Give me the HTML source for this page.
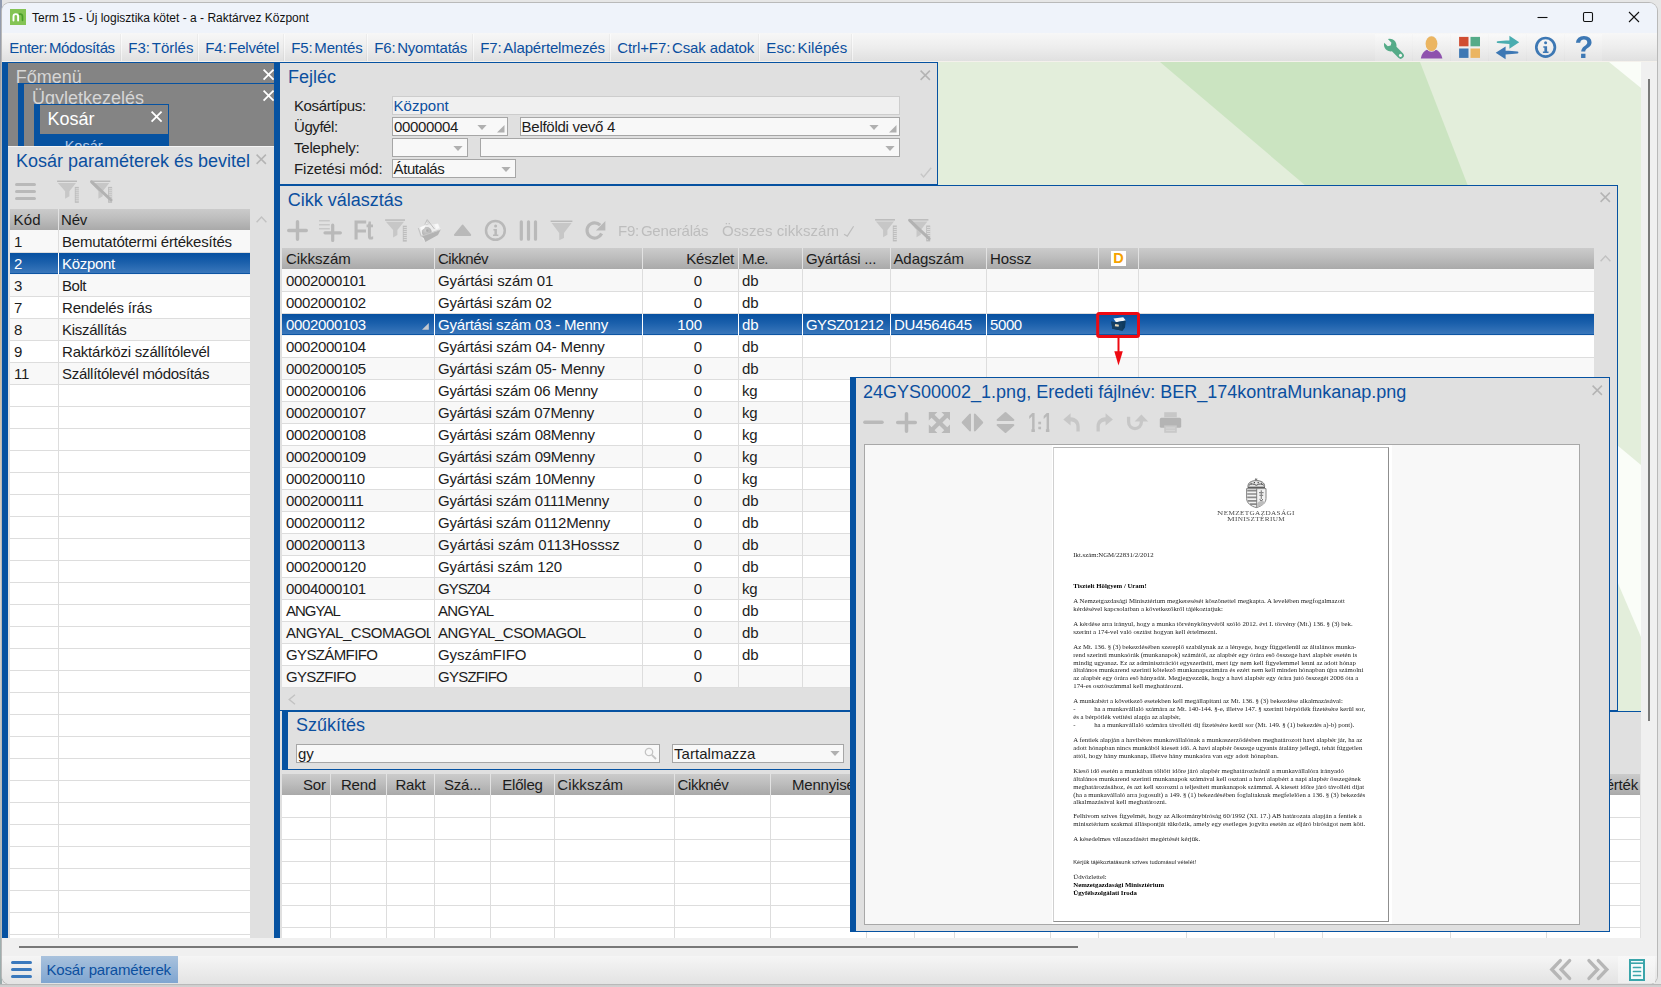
<!DOCTYPE html>
<html lang="hu"><head><meta charset="utf-8"><title>Term 15</title>
<style>
html,body{margin:0;padding:0}
body{width:1661px;height:987px;overflow:hidden;position:relative;background:#ececec;font-family:"Liberation Sans",Arial,sans-serif;}
div{position:absolute;box-sizing:border-box}
.t{white-space:nowrap}
svg{position:absolute;overflow:visible}
.hd{background:linear-gradient(#cbcbcb,#bdbdbd 45%,#a9a9a9);}
.sel{background:linear-gradient(#0650a0,#1a5fab 45%,#3a77bb);border-bottom:1px solid #0d55a3}
.inp{background:#f8f8f8;border:1px solid #a6a6a6;}
.doc{font-family:"Liberation Serif","Times New Roman",serif;font-size:6.77px;line-height:7.78px;color:#222;white-space:nowrap}

</style></head><body>
<div style="left:0px;top:0px;width:1661px;height:987px;background:#e6e6e6"></div><div style="left:0px;top:0px;width:2px;height:987px;background:linear-gradient(#8f9ab0,#c9b38a 30%,#d8d8d8 60%,#9aa)"></div><div style="left:0px;top:984px;width:1661px;height:3px;background:linear-gradient(#a9a9a9,#cdcdcd 40%,#d2d2d2)"></div><div style="left:2px;top:3px;width:1655px;height:981px;background:#f0f0f0;border-radius:8px;box-shadow:0 0 0 1px #b9b9b9"></div><div style="left:2px;top:3px;width:1655px;height:30px;background:#eff3fa;border-radius:8px 8px 0 0"></div><div style="left:10px;top:9px;width:16px;height:16px;background:#84c455"></div><svg style="left:10px;top:9px" width="16" height="16" viewBox="0 0 16 16"><path d="M3.5 11.6V7.4a2.3 2.3 0 0 1 4.600 0V11.600" fill="none" stroke="#fff" stroke-width="1.900" stroke-linecap="round"/><path d="M9.600 5.200C11.600 4.800 12.500 6 12.500 7.600V11.300" fill="none" stroke="#4a9e2a" stroke-width="1.700" stroke-linecap="round"/></svg><div class="t" style="left:32px;top:10.0px;font-size:12px;line-height:16px;color:#111;">Term 15 - Új logisztika kötet - a - Raktárvez Központ</div><svg style="left:0;top:0" width="1661" height="34"><g stroke="#111" stroke-width="1.1" fill="none"><path d="M1537.5 17.5h10"/><rect x="1583.5" y="12.5" width="9" height="9" rx="1.2"/><path d="M1629 12l10 10M1639 12l-10 10"/></g></svg><div style="left:2px;top:33px;width:1655px;height:29px;background:linear-gradient(#f7f7f7,#ededed 50%,#dfdfdf)"></div><div style="left:3px;top:34px;width:119px;height:27px;border-right:1px solid rgba(255,255,255,0.55);box-shadow:-1px 0 0 rgba(0,0,0,0.035) inset"></div><div class="t" style="left:9.3px;top:37.5px;font-size:15px;line-height:20px;color:#0b4f9f;letter-spacing:-0.2px;letter-spacing:-0.371px;">Enter:<span style="margin-left:1.8px">Módosítás</span></div><div style="left:122px;top:34px;width:77px;height:27px;border-right:1px solid rgba(255,255,255,0.55);box-shadow:-1px 0 0 rgba(0,0,0,0.035) inset"></div><div class="t" style="left:128.3px;top:37.5px;font-size:15px;line-height:20px;color:#0b4f9f;letter-spacing:-0.2px;letter-spacing:0.002px;">F3:<span style="margin-left:1.8px">Törlés</span></div><div style="left:199px;top:34px;width:86px;height:27px;border-right:1px solid rgba(255,255,255,0.55);box-shadow:-1px 0 0 rgba(0,0,0,0.035) inset"></div><div class="t" style="left:205.3px;top:37.5px;font-size:15px;line-height:20px;color:#0b4f9f;letter-spacing:-0.2px;letter-spacing:-0.200px;">F4:<span style="margin-left:1.8px">Felvétel</span></div><div style="left:285px;top:34px;width:83px;height:27px;border-right:1px solid rgba(255,255,255,0.55);box-shadow:-1px 0 0 rgba(0,0,0,0.035) inset"></div><div class="t" style="left:291.3px;top:37.5px;font-size:15px;line-height:20px;color:#0b4f9f;letter-spacing:-0.2px;letter-spacing:-0.150px;">F5:<span style="margin-left:1.8px">Mentés</span></div><div style="left:368px;top:34px;width:106px;height:27px;border-right:1px solid rgba(255,255,255,0.55);box-shadow:-1px 0 0 rgba(0,0,0,0.035) inset"></div><div class="t" style="left:374.3px;top:37.5px;font-size:15px;line-height:20px;color:#0b4f9f;letter-spacing:-0.2px;letter-spacing:-0.200px;">F6:<span style="margin-left:1.8px">Nyomtatás</span></div><div style="left:474px;top:34px;width:137px;height:27px;border-right:1px solid rgba(255,255,255,0.55);box-shadow:-1px 0 0 rgba(0,0,0,0.035) inset"></div><div class="t" style="left:480.3px;top:37.5px;font-size:15px;line-height:20px;color:#0b4f9f;letter-spacing:-0.2px;letter-spacing:-0.138px;">F7:<span style="margin-left:1.8px">Alapértelmezés</span></div><div style="left:611px;top:34px;width:149px;height:27px;border-right:1px solid rgba(255,255,255,0.55);box-shadow:-1px 0 0 rgba(0,0,0,0.035) inset"></div><div class="t" style="left:617.3px;top:37.5px;font-size:15px;line-height:20px;color:#0b4f9f;letter-spacing:-0.2px;letter-spacing:-0.109px;">Ctrl+F7:<span style="margin-left:1.8px">Csak adatok</span></div><div style="left:760px;top:34px;width:93px;height:27px;border-right:1px solid rgba(255,255,255,0.55);box-shadow:-1px 0 0 rgba(0,0,0,0.035) inset"></div><div class="t" style="left:766.3px;top:37.5px;font-size:15px;line-height:20px;color:#0b4f9f;letter-spacing:-0.2px;letter-spacing:0.080px;">Esc:<span style="margin-left:1.8px">Kilépés</span></div><div style="left:2px;top:61px;width:1655px;height:1px;background:#f4f1ec"></div><div style="left:1375px;top:34px;width:37px;height:27px;background:linear-gradient(#f9f9f9,#efefef 50%,#e4e4e4)"></div><div style="left:1413px;top:34px;width:37px;height:27px;background:linear-gradient(#f9f9f9,#efefef 50%,#e4e4e4)"></div><div style="left:1451px;top:34px;width:37px;height:27px;background:linear-gradient(#f9f9f9,#efefef 50%,#e4e4e4)"></div><div style="left:1489px;top:34px;width:37px;height:27px;background:linear-gradient(#f9f9f9,#efefef 50%,#e4e4e4)"></div><div style="left:1527px;top:34px;width:37px;height:27px;background:linear-gradient(#f9f9f9,#efefef 50%,#e4e4e4)"></div><div style="left:1565px;top:34px;width:37px;height:27px;background:linear-gradient(#f9f9f9,#efefef 50%,#e4e4e4)"></div><div style="left:8px;top:62px;width:1633px;height:876px;background:#e3eedb"></div><svg style="left:0;top:0" width="1661" height="987"><polygon points="1160,62 1420,62 1468,186 1306,186" fill="#cbe4c1"/><polygon points="1609,62 1641,62 1641,88" fill="#fafdf8"/><polygon points="1617,445 1641,465 1641,637 1617,581" fill="#fafdf8"/></svg><div style="left:1641px;top:62px;width:16px;height:878px;background:#f0f0f0"></div><div style="left:1648px;top:79px;width:2px;height:642px;background:#7a7a7a"></div><div style="left:2px;top:62px;width:272px;height:1px;background:#0652a1"></div><div style="left:2px;top:62px;width:6px;height:876px;background:#0652a1"></div><div style="left:8px;top:63px;width:266px;height:83px;background:#848484"></div><div class="t" style="left:15.7px;top:65.5px;font-size:18px;line-height:23px;color:#d6d6d6;">Főmenü</div><div style="left:18px;top:83px;width:256px;height:1px;background:#0652a1"></div><div style="left:18px;top:83px;width:6px;height:63px;background:#0652a1"></div><div style="left:24px;top:84px;width:250px;height:21px;overflow:hidden"><div class="t" style="left:7.95px;top:3.0px;font-size:18px;line-height:22px;color:#d6d6d6">Ügyletkezelés</div></div><div style="left:34px;top:104px;width:135px;height:1px;background:#0652a1"></div><div style="left:34px;top:104px;width:6px;height:42px;background:#0652a1"></div><div style="left:168px;top:104px;width:1px;height:42px;background:#0652a1"></div><div style="left:40px;top:134px;width:128px;height:12px;background:#0652a1;overflow:hidden"><div class="t" style="left:24.7px;top:3.0px;font-size:14.5px;line-height:18px;color:#b5c9e4">Kosár</div></div><div class="t" style="left:47.6px;top:107.5px;font-size:18px;line-height:23px;color:#ffffff;">Kosár</div><svg style="left:262.8px;top:69px" width="11.2" height="11.2" viewBox="0 0 11.2 11.2"><path d="M0.6 0.6L10.6 10.6M10.6 0.6L0.6 10.6" stroke="#fff" stroke-width="1.8" fill="none"/></svg><svg style="left:262.8px;top:90px" width="11.2" height="11.2" viewBox="0 0 11.2 11.2"><path d="M0.6 0.6L10.6 10.6M10.6 0.6L0.6 10.6" stroke="#fff" stroke-width="1.8" fill="none"/></svg><svg style="left:151px;top:110.8px" width="11.2" height="11.2" viewBox="0 0 11.2 11.2"><path d="M0.6 0.6L10.6 10.6M10.6 0.6L0.6 10.6" stroke="#fff" stroke-width="1.8" fill="none"/></svg><div style="left:8px;top:146px;width:266px;height:792px;background:#e0e0e0;border-top:1px solid #f4f4f4"></div><div class="t" style="left:16px;top:149.5px;font-size:18px;line-height:23px;color:#0b4f9f;">Kosár paraméterek és bevitel</div><svg style="left:256px;top:153.5px" width="10.5" height="10.5" viewBox="0 0 10.5 10.5"><path d="M0.6 0.6L9.9 9.9M9.9 0.6L0.6 9.9" stroke="#b4b4b4" stroke-width="1.5" fill="none"/></svg><div class="hd" style="left:10px;top:209px;width:240px;height:21px;"></div><div style="left:58px;top:209px;width:1px;height:21px;background:#e2e2e2"></div><div class="t" style="left:13.5px;top:209.5px;font-size:15px;line-height:20px;color:#1c1c1c;letter-spacing:-0.2px;letter-spacing:0.200px;">Kód</div><div class="t" style="left:61px;top:209.5px;font-size:15px;line-height:20px;color:#1c1c1c;letter-spacing:-0.2px;letter-spacing:-0.200px;">Név</div><div style="left:10px;top:230px;width:240px;height:23px;background:#f8f8f8;border-bottom:1px solid #dddddd"></div><div class="t" style="left:14px;top:231.5px;font-size:15px;line-height:20px;color:#1c1c1c;letter-spacing:-0.2px;">1</div><div class="t" style="left:62px;top:231.5px;font-size:15px;line-height:20px;color:#1c1c1c;letter-spacing:-0.2px;letter-spacing:-0.210px;">Bemutatótermi értékesítés</div><div style="left:10px;top:253px;width:240px;height:22px;background:#eef2f8"></div><div class="sel" style="left:10px;top:253px;width:240px;height:21px;"></div><div style="left:58px;top:253px;width:1px;height:21px;background:#fff"></div><div class="t" style="left:14px;top:253.5px;font-size:15px;line-height:20px;color:#fff;letter-spacing:-0.2px;">2</div><div class="t" style="left:62px;top:253.5px;font-size:15px;line-height:20px;color:#fff;letter-spacing:-0.2px;letter-spacing:-0.298px;">Központ</div><div style="left:10px;top:275px;width:240px;height:22px;background:#f8f8f8;border-bottom:1px solid #dddddd"></div><div class="t" style="left:14px;top:275.5px;font-size:15px;line-height:20px;color:#1c1c1c;letter-spacing:-0.2px;">3</div><div class="t" style="left:62px;top:275.5px;font-size:15px;line-height:20px;color:#1c1c1c;letter-spacing:-0.2px;letter-spacing:-0.464px;">Bolt</div><div style="left:10px;top:297px;width:240px;height:22px;background:#fff;border-bottom:1px solid #dddddd"></div><div class="t" style="left:14px;top:297.5px;font-size:15px;line-height:20px;color:#1c1c1c;letter-spacing:-0.2px;">7</div><div class="t" style="left:62px;top:297.5px;font-size:15px;line-height:20px;color:#1c1c1c;letter-spacing:-0.2px;letter-spacing:-0.200px;">Rendelés írás</div><div style="left:10px;top:319px;width:240px;height:22px;background:#f8f8f8;border-bottom:1px solid #dddddd"></div><div class="t" style="left:14px;top:319.5px;font-size:15px;line-height:20px;color:#1c1c1c;letter-spacing:-0.2px;">8</div><div class="t" style="left:62px;top:319.5px;font-size:15px;line-height:20px;color:#1c1c1c;letter-spacing:-0.2px;letter-spacing:-0.280px;">Kiszállítás</div><div style="left:10px;top:341px;width:240px;height:22px;background:#fff;border-bottom:1px solid #dddddd"></div><div class="t" style="left:14px;top:341.5px;font-size:15px;line-height:20px;color:#1c1c1c;letter-spacing:-0.2px;">9</div><div class="t" style="left:62px;top:341.5px;font-size:15px;line-height:20px;color:#1c1c1c;letter-spacing:-0.2px;letter-spacing:-0.200px;">Raktárközi szállítólevél</div><div style="left:10px;top:363px;width:240px;height:22px;background:#f8f8f8;border-bottom:1px solid #dddddd"></div><div class="t" style="left:14px;top:363.5px;font-size:15px;line-height:20px;color:#1c1c1c;letter-spacing:-0.2px;">11</div><div class="t" style="left:62px;top:363.5px;font-size:15px;line-height:20px;color:#1c1c1c;letter-spacing:-0.2px;letter-spacing:-0.273px;">Szállítólevél módosítás</div><div style="left:10px;top:385px;width:240px;height:22px;background:#fff;border-bottom:1px solid #dddddd"></div><div style="left:10px;top:407px;width:240px;height:22px;background:#fff;border-bottom:1px solid #dddddd"></div><div style="left:10px;top:429px;width:240px;height:22px;background:#fff;border-bottom:1px solid #dddddd"></div><div style="left:10px;top:451px;width:240px;height:22px;background:#fff;border-bottom:1px solid #dddddd"></div><div style="left:10px;top:473px;width:240px;height:22px;background:#fff;border-bottom:1px solid #dddddd"></div><div style="left:10px;top:495px;width:240px;height:22px;background:#fff;border-bottom:1px solid #dddddd"></div><div style="left:10px;top:517px;width:240px;height:22px;background:#fff;border-bottom:1px solid #dddddd"></div><div style="left:10px;top:539px;width:240px;height:22px;background:#fff;border-bottom:1px solid #dddddd"></div><div style="left:10px;top:561px;width:240px;height:22px;background:#fff;border-bottom:1px solid #dddddd"></div><div style="left:10px;top:583px;width:240px;height:22px;background:#fff;border-bottom:1px solid #dddddd"></div><div style="left:10px;top:605px;width:240px;height:22px;background:#fff;border-bottom:1px solid #dddddd"></div><div style="left:10px;top:627px;width:240px;height:22px;background:#fff;border-bottom:1px solid #dddddd"></div><div style="left:10px;top:649px;width:240px;height:22px;background:#fff;border-bottom:1px solid #dddddd"></div><div style="left:10px;top:671px;width:240px;height:22px;background:#fff;border-bottom:1px solid #dddddd"></div><div style="left:10px;top:693px;width:240px;height:22px;background:#fff;border-bottom:1px solid #dddddd"></div><div style="left:10px;top:715px;width:240px;height:22px;background:#fff;border-bottom:1px solid #dddddd"></div><div style="left:10px;top:737px;width:240px;height:22px;background:#fff;border-bottom:1px solid #dddddd"></div><div style="left:10px;top:759px;width:240px;height:22px;background:#fff;border-bottom:1px solid #dddddd"></div><div style="left:10px;top:781px;width:240px;height:22px;background:#fff;border-bottom:1px solid #dddddd"></div><div style="left:10px;top:803px;width:240px;height:22px;background:#fff;border-bottom:1px solid #dddddd"></div><div style="left:10px;top:825px;width:240px;height:22px;background:#fff;border-bottom:1px solid #dddddd"></div><div style="left:10px;top:847px;width:240px;height:22px;background:#fff;border-bottom:1px solid #dddddd"></div><div style="left:10px;top:869px;width:240px;height:22px;background:#fff;border-bottom:1px solid #dddddd"></div><div style="left:10px;top:891px;width:240px;height:22px;background:#fff;border-bottom:1px solid #dddddd"></div><div style="left:10px;top:913px;width:240px;height:22px;background:#fff;border-bottom:1px solid #dddddd"></div><div style="left:10px;top:935px;width:240px;height:3px;background:#fff;"></div><div style="left:58px;top:230px;width:1px;height:23px;background:#dddddd"></div><div style="left:58px;top:275px;width:1px;height:663px;background:#dddddd"></div><div style="left:274px;top:62px;width:6px;height:876px;background:#0652a1"></div><div style="left:280px;top:62px;width:658px;height:123px;background:#e0e0e0;border:1px solid #0652a1;border-left:0"></div><div class="t" style="left:288px;top:65.5px;font-size:18px;line-height:23px;color:#0b4f9f;">Fejléc</div><svg style="left:920px;top:69.5px" width="10.5" height="10.5" viewBox="0 0 10.5 10.5"><path d="M0.6 0.6L9.9 9.9M9.9 0.6L0.6 9.9" stroke="#b4b4b4" stroke-width="1.5" fill="none"/></svg><div class="t" style="left:294px;top:95.5px;font-size:15px;line-height:20px;color:#1c1c1c;letter-spacing:-0.2px;letter-spacing:-0.380px;">Kosártípus:</div><div class="t" style="left:294px;top:116.5px;font-size:15px;line-height:20px;color:#1c1c1c;letter-spacing:-0.2px;letter-spacing:-0.432px;">Ügyfél:</div><div class="t" style="left:294px;top:137.5px;font-size:15px;line-height:20px;color:#1c1c1c;letter-spacing:-0.2px;letter-spacing:-0.200px;">Telephely:</div><div class="t" style="left:294px;top:158.5px;font-size:15px;line-height:20px;color:#1c1c1c;letter-spacing:-0.2px;letter-spacing:-0.049px;">Fizetési mód:</div><div style="left:392px;top:96px;width:508px;height:19px;background:#f0f0f0;border:1px solid #cdcdcd"></div><div class="t" style="left:393.6px;top:95.5px;font-size:15px;line-height:20px;color:#0b4f9f;letter-spacing:-0.2px;letter-spacing:0.001px;">Központ</div><div class="inp" style="left:392px;top:117px;width:116px;height:19px;"></div><div class="t" style="left:394px;top:116.5px;font-size:15px;line-height:20px;color:#1c1c1c;letter-spacing:-0.2px;letter-spacing:-0.36px">00000004</div><div class="inp" style="left:520px;top:117px;width:380px;height:19px;"></div><div class="t" style="left:521.6px;top:116.5px;font-size:15px;line-height:20px;color:#1c1c1c;letter-spacing:-0.2px;letter-spacing:-0.271px;">Belföldi vevő 4</div><div class="inp" style="left:392px;top:138px;width:76px;height:19px;"></div><div class="inp" style="left:480px;top:138px;width:420px;height:19px;"></div><div class="inp" style="left:392px;top:159px;width:124px;height:19px;"></div><div class="t" style="left:393.6px;top:158.5px;font-size:15px;line-height:20px;color:#1c1c1c;letter-spacing:-0.2px;letter-spacing:-0.430px;">Átutalás</div><svg style="left:476.5px;top:124.5px" width="10" height="5" viewBox="0 0 10 5"><path d="M0.4 0h9.2L5 5z" fill="#b0b0b0"/></svg><svg style="left:497px;top:125px" width="7.5" height="7.5" viewBox="0 0 7.5 7.5"><path d="M7.5 0V7.5H0z" fill="#b0b0b0"/></svg><svg style="left:868.5px;top:124.5px" width="10" height="5" viewBox="0 0 10 5"><path d="M0.4 0h9.2L5 5z" fill="#b0b0b0"/></svg><svg style="left:888.5px;top:125px" width="7.5" height="7.5" viewBox="0 0 7.5 7.5"><path d="M7.5 0V7.5H0z" fill="#b0b0b0"/></svg><svg style="left:453px;top:145.5px" width="10" height="5" viewBox="0 0 10 5"><path d="M0.4 0h9.2L5 5z" fill="#b0b0b0"/></svg><svg style="left:885px;top:145.5px" width="10" height="5" viewBox="0 0 10 5"><path d="M0.4 0h9.2L5 5z" fill="#b0b0b0"/></svg><svg style="left:500.5px;top:166.5px" width="10" height="5" viewBox="0 0 10 5"><path d="M0.4 0h9.2L5 5z" fill="#b0b0b0"/></svg><svg style="left:920px;top:167px" width="12" height="11" viewBox="0 0 12 11"><path d="M0.8 6.8L3.6 10L11.2 0.8" stroke="#c6c6c6" stroke-width="1.4" fill="none"/></svg><div style="left:280px;top:185px;width:1338px;height:526px;background:#e0e0e0;border:1px solid #0652a1;border-left:0"></div><div class="t" style="left:287.7px;top:188.5px;font-size:18px;line-height:23px;color:#0b4f9f;">Cikk választás</div><svg style="left:1600px;top:192.3px" width="10.5" height="10.5" viewBox="0 0 10.5 10.5"><path d="M0.6 0.6L9.9 9.9M9.9 0.6L0.6 9.9" stroke="#b4b4b4" stroke-width="1.5" fill="none"/></svg><div class="hd" style="left:282px;top:248px;width:1312px;height:21px;"></div><div style="left:434px;top:248px;width:1px;height:21px;background:#e2e2e2"></div><div style="left:642px;top:248px;width:1px;height:21px;background:#e2e2e2"></div><div style="left:738px;top:248px;width:1px;height:21px;background:#e2e2e2"></div><div style="left:802px;top:248px;width:1px;height:21px;background:#e2e2e2"></div><div style="left:890px;top:248px;width:1px;height:21px;background:#e2e2e2"></div><div style="left:986px;top:248px;width:1px;height:21px;background:#e2e2e2"></div><div style="left:1098px;top:248px;width:1px;height:21px;background:#e2e2e2"></div><div style="left:1138px;top:248px;width:1px;height:21px;background:#e2e2e2"></div><div class="t" style="left:286px;top:248.5px;font-size:15px;line-height:20px;color:#1c1c1c;letter-spacing:-0.2px;letter-spacing:-0.029px;">Cikkszám</div><div class="t" style="left:438px;top:248.5px;font-size:15px;line-height:20px;color:#1c1c1c;letter-spacing:-0.2px;letter-spacing:-0.468px;">Cikknév</div><div class="t" style="left:642px;top:248.5px;font-size:15px;line-height:20px;color:#1c1c1c;letter-spacing:-0.2px;width:92px;text-align:right;">Készlet</div><div class="t" style="left:742px;top:248.5px;font-size:15px;line-height:20px;color:#1c1c1c;letter-spacing:-0.2px;letter-spacing:-0.934px;">M.e.</div><div class="t" style="left:806px;top:248.5px;font-size:15px;line-height:20px;color:#1c1c1c;letter-spacing:-0.2px;letter-spacing:-0.183px;">Gyártási ...</div><div class="t" style="left:893.4px;top:248.5px;font-size:15px;line-height:20px;color:#1c1c1c;letter-spacing:-0.2px;letter-spacing:-0.028px;">Adagszám</div><div class="t" style="left:990px;top:248.5px;font-size:15px;line-height:20px;color:#1c1c1c;letter-spacing:-0.2px;letter-spacing:-0.050px;">Hossz</div><div style="left:1111px;top:251px;width:15px;height:15px;background:#fff"></div><div class="t" style="left:1111px;top:248.7px;font-size:14.5px;line-height:19px;color:#f6a200;font-weight:bold;width:15px;text-align:center">D</div><div style="left:282px;top:269px;width:1312px;height:23px;background:#f8f8f8;border-bottom:1px solid #dddddd"></div><div style="left:282px;top:270px;width:148.5px;height:21px;overflow:hidden"><div class="t" style="left:4px;top:1.0px;font-size:15px;line-height:19px;color:#1c1c1c;letter-spacing:-0.36px">0002000101</div></div><div class="t" style="left:438px;top:270.5px;font-size:15px;line-height:20px;color:#1c1c1c;letter-spacing:-0.2px;letter-spacing:-0.092px;">Gyártási szám 01</div><div class="t" style="left:642px;top:270.5px;font-size:15px;line-height:20px;color:#1c1c1c;letter-spacing:-0.2px;width:59.8px;text-align:right;">0</div><div class="t" style="left:742px;top:270.5px;font-size:15px;line-height:20px;color:#1c1c1c;letter-spacing:-0.2px;">db</div><div style="left:282px;top:292px;width:1312px;height:22px;background:#fff;border-bottom:1px solid #dddddd"></div><div style="left:282px;top:292px;width:148.5px;height:21px;overflow:hidden"><div class="t" style="left:4px;top:1.0px;font-size:15px;line-height:19px;color:#1c1c1c;letter-spacing:-0.36px">0002000102</div></div><div class="t" style="left:438px;top:292.5px;font-size:15px;line-height:20px;color:#1c1c1c;letter-spacing:-0.2px;letter-spacing:-0.186px;">Gyártási szám 02</div><div class="t" style="left:642px;top:292.5px;font-size:15px;line-height:20px;color:#1c1c1c;letter-spacing:-0.2px;width:59.8px;text-align:right;">0</div><div class="t" style="left:742px;top:292.5px;font-size:15px;line-height:20px;color:#1c1c1c;letter-spacing:-0.2px;">db</div><div style="left:282px;top:314px;width:1312px;height:22px;background:#eef2f8"></div><div class="sel" style="left:282px;top:314px;width:1312px;height:21px;"></div><div style="left:434px;top:314px;width:1px;height:21px;background:#fff"></div><div style="left:642px;top:314px;width:1px;height:21px;background:#fff"></div><div style="left:738px;top:314px;width:1px;height:21px;background:#fff"></div><div style="left:802px;top:314px;width:1px;height:21px;background:#fff"></div><div style="left:890px;top:314px;width:1px;height:21px;background:#fff"></div><div style="left:986px;top:314px;width:1px;height:21px;background:#fff"></div><div style="left:1098px;top:314px;width:1px;height:21px;background:#fff"></div><div style="left:1138px;top:314px;width:1px;height:21px;background:#fff"></div><div style="left:282px;top:314px;width:148.5px;height:21px;overflow:hidden"><div class="t" style="left:4px;top:1.0px;font-size:15px;line-height:19px;color:#fff;letter-spacing:-0.36px">0002000103</div></div><div class="t" style="left:438px;top:314.5px;font-size:15px;line-height:20px;color:#fff;letter-spacing:-0.2px;letter-spacing:-0.211px;">Gyártási szám 03 - Menny</div><div class="t" style="left:642px;top:314.5px;font-size:15px;line-height:20px;color:#fff;letter-spacing:-0.2px;width:59.8px;text-align:right;">100</div><div class="t" style="left:742px;top:314.5px;font-size:15px;line-height:20px;color:#fff;letter-spacing:-0.2px;">db</div><div class="t" style="left:806px;top:314.5px;font-size:15px;line-height:20px;color:#fff;letter-spacing:-0.2px;letter-spacing:-0.598px;">GYSZ01212</div><div class="t" style="left:894px;top:314.5px;font-size:15px;line-height:20px;color:#fff;letter-spacing:-0.2px;letter-spacing:-0.250px;">DU4564645</div><div class="t" style="left:990px;top:314.5px;font-size:15px;line-height:20px;color:#fff;letter-spacing:-0.2px;letter-spacing:-0.399px;">5000</div><svg style="left:421.8px;top:322.8px" width="6.8" height="6.8" viewBox="0 0 6.8 6.8"><path d="M6.8 0V6.8H0z" fill="#c4c8cf"/></svg><div style="left:282px;top:336px;width:1312px;height:22px;background:#fff;border-bottom:1px solid #dddddd"></div><div style="left:282px;top:336px;width:148.5px;height:21px;overflow:hidden"><div class="t" style="left:4px;top:1.0px;font-size:15px;line-height:19px;color:#1c1c1c;letter-spacing:-0.36px">0002000104</div></div><div class="t" style="left:438px;top:336.5px;font-size:15px;line-height:20px;color:#1c1c1c;letter-spacing:-0.2px;letter-spacing:-0.183px;">Gyártási szám 04- Menny</div><div class="t" style="left:642px;top:336.5px;font-size:15px;line-height:20px;color:#1c1c1c;letter-spacing:-0.2px;width:59.8px;text-align:right;">0</div><div class="t" style="left:742px;top:336.5px;font-size:15px;line-height:20px;color:#1c1c1c;letter-spacing:-0.2px;">db</div><div style="left:282px;top:358px;width:1312px;height:22px;background:#f8f8f8;border-bottom:1px solid #dddddd"></div><div style="left:282px;top:358px;width:148.5px;height:21px;overflow:hidden"><div class="t" style="left:4px;top:1.0px;font-size:15px;line-height:19px;color:#1c1c1c;letter-spacing:-0.36px">0002000105</div></div><div class="t" style="left:438px;top:358.5px;font-size:15px;line-height:20px;color:#1c1c1c;letter-spacing:-0.2px;letter-spacing:-0.183px;">Gyártási szám 05- Menny</div><div class="t" style="left:642px;top:358.5px;font-size:15px;line-height:20px;color:#1c1c1c;letter-spacing:-0.2px;width:59.8px;text-align:right;">0</div><div class="t" style="left:742px;top:358.5px;font-size:15px;line-height:20px;color:#1c1c1c;letter-spacing:-0.2px;">db</div><div style="left:282px;top:380px;width:1312px;height:22px;background:#fff;border-bottom:1px solid #dddddd"></div><div style="left:282px;top:380px;width:148.5px;height:21px;overflow:hidden"><div class="t" style="left:4px;top:1.0px;font-size:15px;line-height:19px;color:#1c1c1c;letter-spacing:-0.36px">0002000106</div></div><div class="t" style="left:438px;top:380.5px;font-size:15px;line-height:20px;color:#1c1c1c;letter-spacing:-0.2px;letter-spacing:-0.279px;">Gyártási szám 06 Menny</div><div class="t" style="left:642px;top:380.5px;font-size:15px;line-height:20px;color:#1c1c1c;letter-spacing:-0.2px;width:59.8px;text-align:right;">0</div><div class="t" style="left:742px;top:380.5px;font-size:15px;line-height:20px;color:#1c1c1c;letter-spacing:-0.2px;">kg</div><div style="left:282px;top:402px;width:1312px;height:22px;background:#f8f8f8;border-bottom:1px solid #dddddd"></div><div style="left:282px;top:402px;width:148.5px;height:21px;overflow:hidden"><div class="t" style="left:4px;top:1.0px;font-size:15px;line-height:19px;color:#1c1c1c;letter-spacing:-0.36px">0002000107</div></div><div class="t" style="left:438px;top:402.5px;font-size:15px;line-height:20px;color:#1c1c1c;letter-spacing:-0.2px;letter-spacing:-0.270px;">Gyártási szám 07Menny</div><div class="t" style="left:642px;top:402.5px;font-size:15px;line-height:20px;color:#1c1c1c;letter-spacing:-0.2px;width:59.8px;text-align:right;">0</div><div class="t" style="left:742px;top:402.5px;font-size:15px;line-height:20px;color:#1c1c1c;letter-spacing:-0.2px;">kg</div><div style="left:282px;top:424px;width:1312px;height:22px;background:#fff;border-bottom:1px solid #dddddd"></div><div style="left:282px;top:424px;width:148.5px;height:21px;overflow:hidden"><div class="t" style="left:4px;top:1.0px;font-size:15px;line-height:19px;color:#1c1c1c;letter-spacing:-0.36px">0002000108</div></div><div class="t" style="left:438px;top:424.5px;font-size:15px;line-height:20px;color:#1c1c1c;letter-spacing:-0.2px;letter-spacing:-0.240px;">Gyártási szám 08Menny</div><div class="t" style="left:642px;top:424.5px;font-size:15px;line-height:20px;color:#1c1c1c;letter-spacing:-0.2px;width:59.8px;text-align:right;">0</div><div class="t" style="left:742px;top:424.5px;font-size:15px;line-height:20px;color:#1c1c1c;letter-spacing:-0.2px;">kg</div><div style="left:282px;top:446px;width:1312px;height:22px;background:#f8f8f8;border-bottom:1px solid #dddddd"></div><div style="left:282px;top:446px;width:148.5px;height:21px;overflow:hidden"><div class="t" style="left:4px;top:1.0px;font-size:15px;line-height:19px;color:#1c1c1c;letter-spacing:-0.36px">0002000109</div></div><div class="t" style="left:438px;top:446.5px;font-size:15px;line-height:20px;color:#1c1c1c;letter-spacing:-0.2px;letter-spacing:-0.240px;">Gyártási szám 09Menny</div><div class="t" style="left:642px;top:446.5px;font-size:15px;line-height:20px;color:#1c1c1c;letter-spacing:-0.2px;width:59.8px;text-align:right;">0</div><div class="t" style="left:742px;top:446.5px;font-size:15px;line-height:20px;color:#1c1c1c;letter-spacing:-0.2px;">kg</div><div style="left:282px;top:468px;width:1312px;height:22px;background:#fff;border-bottom:1px solid #dddddd"></div><div style="left:282px;top:468px;width:148.5px;height:21px;overflow:hidden"><div class="t" style="left:4px;top:1.0px;font-size:15px;line-height:19px;color:#1c1c1c;letter-spacing:-0.36px">0002000110</div></div><div class="t" style="left:438px;top:468.5px;font-size:15px;line-height:20px;color:#1c1c1c;letter-spacing:-0.2px;letter-spacing:-0.240px;">Gyártási szám 10Menny</div><div class="t" style="left:642px;top:468.5px;font-size:15px;line-height:20px;color:#1c1c1c;letter-spacing:-0.2px;width:59.8px;text-align:right;">0</div><div class="t" style="left:742px;top:468.5px;font-size:15px;line-height:20px;color:#1c1c1c;letter-spacing:-0.2px;">kg</div><div style="left:282px;top:490px;width:1312px;height:22px;background:#f8f8f8;border-bottom:1px solid #dddddd"></div><div style="left:282px;top:490px;width:148.5px;height:21px;overflow:hidden"><div class="t" style="left:4px;top:1.0px;font-size:15px;line-height:19px;color:#1c1c1c;letter-spacing:-0.36px">0002000111</div></div><div class="t" style="left:438px;top:490.5px;font-size:15px;line-height:20px;color:#1c1c1c;letter-spacing:-0.2px;letter-spacing:-0.226px;">Gyártási szám 0111Menny</div><div class="t" style="left:642px;top:490.5px;font-size:15px;line-height:20px;color:#1c1c1c;letter-spacing:-0.2px;width:59.8px;text-align:right;">0</div><div class="t" style="left:742px;top:490.5px;font-size:15px;line-height:20px;color:#1c1c1c;letter-spacing:-0.2px;">db</div><div style="left:282px;top:512px;width:1312px;height:22px;background:#fff;border-bottom:1px solid #dddddd"></div><div style="left:282px;top:512px;width:148.5px;height:21px;overflow:hidden"><div class="t" style="left:4px;top:1.0px;font-size:15px;line-height:19px;color:#1c1c1c;letter-spacing:-0.36px">0002000112</div></div><div class="t" style="left:438px;top:512.5px;font-size:15px;line-height:20px;color:#1c1c1c;letter-spacing:-0.2px;letter-spacing:-0.226px;">Gyártási szám 0112Menny</div><div class="t" style="left:642px;top:512.5px;font-size:15px;line-height:20px;color:#1c1c1c;letter-spacing:-0.2px;width:59.8px;text-align:right;">0</div><div class="t" style="left:742px;top:512.5px;font-size:15px;line-height:20px;color:#1c1c1c;letter-spacing:-0.2px;">db</div><div style="left:282px;top:534px;width:1312px;height:22px;background:#f8f8f8;border-bottom:1px solid #dddddd"></div><div style="left:282px;top:534px;width:148.5px;height:21px;overflow:hidden"><div class="t" style="left:4px;top:1.0px;font-size:15px;line-height:19px;color:#1c1c1c;letter-spacing:-0.36px">0002000113</div></div><div class="t" style="left:438px;top:534.5px;font-size:15px;line-height:20px;color:#1c1c1c;letter-spacing:-0.2px;letter-spacing:0.010px;">Gyártási szám 0113Hosssz</div><div class="t" style="left:642px;top:534.5px;font-size:15px;line-height:20px;color:#1c1c1c;letter-spacing:-0.2px;width:59.8px;text-align:right;">0</div><div class="t" style="left:742px;top:534.5px;font-size:15px;line-height:20px;color:#1c1c1c;letter-spacing:-0.2px;">db</div><div style="left:282px;top:556px;width:1312px;height:22px;background:#fff;border-bottom:1px solid #dddddd"></div><div style="left:282px;top:556px;width:148.5px;height:21px;overflow:hidden"><div class="t" style="left:4px;top:1.0px;font-size:15px;line-height:19px;color:#1c1c1c;letter-spacing:-0.36px">0002000120</div></div><div class="t" style="left:438px;top:556.5px;font-size:15px;line-height:20px;color:#1c1c1c;letter-spacing:-0.2px;letter-spacing:-0.052px;">Gyártási szám 120</div><div class="t" style="left:642px;top:556.5px;font-size:15px;line-height:20px;color:#1c1c1c;letter-spacing:-0.2px;width:59.8px;text-align:right;">0</div><div class="t" style="left:742px;top:556.5px;font-size:15px;line-height:20px;color:#1c1c1c;letter-spacing:-0.2px;">db</div><div style="left:282px;top:578px;width:1312px;height:22px;background:#f8f8f8;border-bottom:1px solid #dddddd"></div><div style="left:282px;top:578px;width:148.5px;height:21px;overflow:hidden"><div class="t" style="left:4px;top:1.0px;font-size:15px;line-height:19px;color:#1c1c1c;letter-spacing:-0.36px">0004000101</div></div><div class="t" style="left:438px;top:578.5px;font-size:15px;line-height:20px;color:#1c1c1c;letter-spacing:-0.2px;letter-spacing:-1.000px;">GYSZ04</div><div class="t" style="left:642px;top:578.5px;font-size:15px;line-height:20px;color:#1c1c1c;letter-spacing:-0.2px;width:59.8px;text-align:right;">0</div><div class="t" style="left:742px;top:578.5px;font-size:15px;line-height:20px;color:#1c1c1c;letter-spacing:-0.2px;">kg</div><div style="left:282px;top:600px;width:1312px;height:22px;background:#fff;border-bottom:1px solid #dddddd"></div><div style="left:282px;top:600px;width:148.5px;height:21px;overflow:hidden"><div class="t" style="left:4px;top:1.0px;font-size:15px;line-height:19px;color:#1c1c1c;letter-spacing:-1.0px">ANGYAL</div></div><div class="t" style="left:438px;top:600.5px;font-size:15px;line-height:20px;color:#1c1c1c;letter-spacing:-0.2px;letter-spacing:-0.720px;">ANGYAL</div><div class="t" style="left:642px;top:600.5px;font-size:15px;line-height:20px;color:#1c1c1c;letter-spacing:-0.2px;width:59.8px;text-align:right;">0</div><div class="t" style="left:742px;top:600.5px;font-size:15px;line-height:20px;color:#1c1c1c;letter-spacing:-0.2px;">db</div><div style="left:282px;top:622px;width:1312px;height:22px;background:#f8f8f8;border-bottom:1px solid #dddddd"></div><div style="left:282px;top:622px;width:148.5px;height:21px;overflow:hidden"><div class="t" style="left:4px;top:1.0px;font-size:15px;line-height:19px;color:#1c1c1c;letter-spacing:-0.47px">ANGYAL_CSOMAGOL</div></div><div class="t" style="left:438px;top:622.5px;font-size:15px;line-height:20px;color:#1c1c1c;letter-spacing:-0.2px;letter-spacing:-0.470px;">ANGYAL_CSOMAGOL</div><div class="t" style="left:642px;top:622.5px;font-size:15px;line-height:20px;color:#1c1c1c;letter-spacing:-0.2px;width:59.8px;text-align:right;">0</div><div class="t" style="left:742px;top:622.5px;font-size:15px;line-height:20px;color:#1c1c1c;letter-spacing:-0.2px;">db</div><div style="left:282px;top:644px;width:1312px;height:22px;background:#fff;border-bottom:1px solid #dddddd"></div><div style="left:282px;top:644px;width:148.5px;height:21px;overflow:hidden"><div class="t" style="left:4px;top:1.0px;font-size:15px;line-height:19px;color:#1c1c1c;letter-spacing:-0.62px">GYSZÁMFIFO</div></div><div class="t" style="left:438px;top:644.5px;font-size:15px;line-height:20px;color:#1c1c1c;letter-spacing:-0.2px;letter-spacing:-0.070px;">GyszámFIFO</div><div class="t" style="left:642px;top:644.5px;font-size:15px;line-height:20px;color:#1c1c1c;letter-spacing:-0.2px;width:59.8px;text-align:right;">0</div><div class="t" style="left:742px;top:644.5px;font-size:15px;line-height:20px;color:#1c1c1c;letter-spacing:-0.2px;">db</div><div style="left:282px;top:666px;width:1312px;height:22px;background:#f8f8f8;border-bottom:1px solid #dddddd"></div><div style="left:282px;top:666px;width:148.5px;height:21px;overflow:hidden"><div class="t" style="left:4px;top:1.0px;font-size:15px;line-height:19px;color:#1c1c1c;letter-spacing:-0.658px">GYSZFIFO</div></div><div class="t" style="left:438px;top:666.5px;font-size:15px;line-height:20px;color:#1c1c1c;letter-spacing:-0.2px;letter-spacing:-0.744px;">GYSZFIFO</div><div class="t" style="left:642px;top:666.5px;font-size:15px;line-height:20px;color:#1c1c1c;letter-spacing:-0.2px;width:59.8px;text-align:right;">0</div><div style="left:434px;top:269px;width:1px;height:45px;background:#dddddd"></div><div style="left:434px;top:336px;width:1px;height:352px;background:#dddddd"></div><div style="left:642px;top:269px;width:1px;height:45px;background:#dddddd"></div><div style="left:642px;top:336px;width:1px;height:352px;background:#dddddd"></div><div style="left:738px;top:269px;width:1px;height:45px;background:#dddddd"></div><div style="left:738px;top:336px;width:1px;height:352px;background:#dddddd"></div><div style="left:802px;top:269px;width:1px;height:45px;background:#dddddd"></div><div style="left:802px;top:336px;width:1px;height:352px;background:#dddddd"></div><div style="left:890px;top:269px;width:1px;height:45px;background:#dddddd"></div><div style="left:890px;top:336px;width:1px;height:352px;background:#dddddd"></div><div style="left:986px;top:269px;width:1px;height:45px;background:#dddddd"></div><div style="left:986px;top:336px;width:1px;height:352px;background:#dddddd"></div><div style="left:1098px;top:269px;width:1px;height:45px;background:#dddddd"></div><div style="left:1098px;top:336px;width:1px;height:352px;background:#dddddd"></div><div style="left:1138px;top:269px;width:1px;height:45px;background:#dddddd"></div><div style="left:1138px;top:336px;width:1px;height:352px;background:#dddddd"></div><svg style="left:288px;top:693.5px" width="8" height="11" viewBox="0 0 8 11"><path d="M7 0.7L1.2 5.5L7 10.3" stroke="#c2c2c2" stroke-width="1.4" fill="none"/></svg><svg style="left:1600px;top:254.5px" width="11" height="7" viewBox="0 0 11 7"><path d="M0.6 6.3L5.5 1L10.4 6.3" stroke="#c2c2c2" stroke-width="1.4" fill="none"/></svg><svg style="left:256px;top:215.5px" width="11" height="7" viewBox="0 0 11 7"><path d="M0.6 6.3L5.5 1L10.4 6.3" stroke="#c2c2c2" stroke-width="1.4" fill="none"/></svg><div style="left:280px;top:711px;width:1361px;height:227px;background:#e0e0e0"></div><div style="left:282px;top:711px;width:1359px;height:1px;background:#0652a1"></div><div style="left:282px;top:711px;width:1300px;height:59px;background:#e0e0e0;border-top:1px solid #0652a1;border-bottom:1px solid #0652a1;border-left:6px solid #0652a1"></div><div class="t" style="left:296px;top:713.5px;font-size:18px;line-height:23px;color:#0b4f9f;">Szűkítés</div><div class="inp" style="left:296px;top:744px;width:364px;height:19px;"></div><div class="t" style="left:298px;top:743.5px;font-size:15px;line-height:20px;color:#1c1c1c;letter-spacing:-0.2px;">gy</div><div class="inp" style="left:672px;top:744px;width:172px;height:19px;"></div><div class="t" style="left:674px;top:743.5px;font-size:15px;line-height:20px;color:#1c1c1c;letter-spacing:-0.2px;letter-spacing:0.040px;">Tartalmazza</div><svg style="left:829.6px;top:750.8px" width="10" height="5" viewBox="0 0 10 5"><path d="M0.4 0h9.2L5 5z" fill="#b0b0b0"/></svg><svg style="left:644px;top:747px" width="13" height="13" viewBox="0 0 13 13"><circle cx="5" cy="5" r="3.7" fill="none" stroke="#c4c4c4" stroke-width="1.3"/><path d="M7.8 7.8L12 12" stroke="#c4c4c4" stroke-width="1.8"/></svg><div class="hd" style="left:282px;top:774px;width:1358px;height:21px;"></div><div style="left:330px;top:774px;width:1px;height:21px;background:#e2e2e2"></div><div style="left:386px;top:774px;width:1px;height:21px;background:#e2e2e2"></div><div style="left:434px;top:774px;width:1px;height:21px;background:#e2e2e2"></div><div style="left:490px;top:774px;width:1px;height:21px;background:#e2e2e2"></div><div style="left:554px;top:774px;width:1px;height:21px;background:#e2e2e2"></div><div style="left:674px;top:774px;width:1px;height:21px;background:#e2e2e2"></div><div style="left:770px;top:774px;width:1px;height:21px;background:#e2e2e2"></div><div style="left:866px;top:774px;width:1px;height:21px;background:#e2e2e2"></div><div style="left:914px;top:774px;width:1px;height:21px;background:#e2e2e2"></div><div style="left:954px;top:774px;width:1px;height:21px;background:#e2e2e2"></div><div style="left:1050px;top:774px;width:1px;height:21px;background:#e2e2e2"></div><div style="left:1098px;top:774px;width:1px;height:21px;background:#e2e2e2"></div><div style="left:1186px;top:774px;width:1px;height:21px;background:#e2e2e2"></div><div style="left:1274px;top:774px;width:1px;height:21px;background:#e2e2e2"></div><div style="left:1322px;top:774px;width:1px;height:21px;background:#e2e2e2"></div><div style="left:1450px;top:774px;width:1px;height:21px;background:#e2e2e2"></div><div style="left:1546px;top:774px;width:1px;height:21px;background:#e2e2e2"></div><div class="t" style="left:282px;top:774.5px;font-size:15px;line-height:20px;color:#1c1c1c;letter-spacing:-0.2px;width:43.8px;text-align:right;">Sor</div><div class="t" style="left:330px;top:774.5px;font-size:15px;line-height:20px;color:#1c1c1c;letter-spacing:-0.2px;width:57px;text-align:center;">Rend</div><div class="t" style="left:386px;top:774.5px;font-size:15px;line-height:20px;color:#1c1c1c;letter-spacing:-0.2px;width:49px;text-align:center;">Rakt</div><div class="t" style="left:434px;top:774.5px;font-size:15px;line-height:20px;color:#1c1c1c;letter-spacing:-0.2px;width:57px;text-align:center;">Szá...</div><div class="t" style="left:490px;top:774.5px;font-size:15px;line-height:20px;color:#1c1c1c;letter-spacing:-0.2px;width:65px;text-align:center;">Előleg</div><div class="t" style="left:557.3px;top:774.5px;font-size:15px;line-height:20px;color:#1c1c1c;letter-spacing:-0.2px;letter-spacing:0.116px;">Cikkszám</div><div class="t" style="left:677.6px;top:774.5px;font-size:15px;line-height:20px;color:#1c1c1c;letter-spacing:-0.2px;letter-spacing:-0.366px;">Cikknév</div><div class="t" style="left:792px;top:774.5px;font-size:15px;line-height:20px;color:#1c1c1c;letter-spacing:-0.2px;">Mennyiség</div><div class="t" style="left:1546px;top:774.5px;font-size:15px;line-height:20px;color:#1c1c1c;letter-spacing:-0.2px;width:92px;text-align:right;">Nettó érték</div><div style="left:282px;top:795px;width:1358px;height:143px;background:#fff"></div><div style="left:282px;top:817px;width:1358px;height:1px;background:#dddddd"></div><div style="left:282px;top:839px;width:1358px;height:1px;background:#dddddd"></div><div style="left:282px;top:861px;width:1358px;height:1px;background:#dddddd"></div><div style="left:282px;top:883px;width:1358px;height:1px;background:#dddddd"></div><div style="left:282px;top:905px;width:1358px;height:1px;background:#dddddd"></div><div style="left:282px;top:927px;width:1358px;height:1px;background:#dddddd"></div><div style="left:330px;top:795px;width:1px;height:143px;background:#dddddd"></div><div style="left:386px;top:795px;width:1px;height:143px;background:#dddddd"></div><div style="left:434px;top:795px;width:1px;height:143px;background:#dddddd"></div><div style="left:490px;top:795px;width:1px;height:143px;background:#dddddd"></div><div style="left:554px;top:795px;width:1px;height:143px;background:#dddddd"></div><div style="left:674px;top:795px;width:1px;height:143px;background:#dddddd"></div><div style="left:770px;top:795px;width:1px;height:143px;background:#dddddd"></div><div style="left:866px;top:795px;width:1px;height:143px;background:#dddddd"></div><div style="left:914px;top:795px;width:1px;height:143px;background:#dddddd"></div><div style="left:954px;top:795px;width:1px;height:143px;background:#dddddd"></div><div style="left:1050px;top:795px;width:1px;height:143px;background:#dddddd"></div><div style="left:1098px;top:795px;width:1px;height:143px;background:#dddddd"></div><div style="left:1186px;top:795px;width:1px;height:143px;background:#dddddd"></div><div style="left:1274px;top:795px;width:1px;height:143px;background:#dddddd"></div><div style="left:1322px;top:795px;width:1px;height:143px;background:#dddddd"></div><div style="left:1450px;top:795px;width:1px;height:143px;background:#dddddd"></div><div style="left:1546px;top:795px;width:1px;height:143px;background:#dddddd"></div><div style="left:2px;top:938px;width:1655px;height:46px;background:linear-gradient(#f0f0f0,#f0f0f0 38%,#f5f5f5 40%,#e3e3e3);border-radius:0 0 8px 8px"></div><div style="left:19px;top:946px;width:1059px;height:2px;background:#787878"></div><div style="left:41px;top:956px;width:137px;height:27px;background:linear-gradient(#a9c2dd,#7fa5d0)"></div><div class="t" style="left:46.5px;top:959.5px;font-size:15px;line-height:20px;color:#0b4f9f;letter-spacing:-0.2px;letter-spacing:-0.189px;">Kosár paraméterek</div><svg style="left:11px;top:961px" width="21" height="17" viewBox="0 0 21 17"><g stroke="#3a79bd" stroke-width="3" stroke-linecap="round"><path d="M1.5 1.5h18M1.5 8.5h18M1.5 15.5h18"/></g></svg><div style="left:1618px;top:956px;width:37px;height:27px;background:linear-gradient(#f8f8f8,#efefef)"></div><svg style="left:1549px;top:958px" width="62" height="23" viewBox="0 0 62 23"><g stroke="#b6b6b6" stroke-width="3.4" fill="none" stroke-linecap="round" stroke-linejoin="miter"><path d="M11.300 2.600L2.800 11.500L11.300 20.400M20.600 2.600L12.100 11.500L20.600 20.400"/><path d="M40 2.600L48.500 11.500L40 20.400M49.300 2.600L57.800 11.500L49.300 20.400"/></g></svg><svg style="left:1628.5px;top:958.5px" width="16" height="22" viewBox="0 0 16 22"><rect x="1" y="1" width="14" height="20" fill="#f4fbfb" stroke="#3aa5aa" stroke-width="2"/><path d="M1 4.2h14" stroke="#3aa5aa" stroke-width="1.6"/><path d="M4.5 8.5h7M4.5 12.5h7M4.5 16.5h7" stroke="#3aa5aa" stroke-width="1.7" stroke-linecap="round"/></svg><div style="left:850px;top:377px;width:760px;height:555px;background:#e0e0e0;border:1px solid #0652a1;border-left:6px solid #0652a1"></div><div class="t" style="left:863px;top:380.5px;font-size:18px;line-height:23px;color:#0b4f9f;">24GYS00002_1.png, Eredeti fájlnév: BER_174kontraMunkanap.png</div><svg style="left:1592px;top:384.5px" width="10.5" height="10.5" viewBox="0 0 10.5 10.5"><path d="M0.6 0.6L9.9 9.9M9.9 0.6L0.6 9.9" stroke="#b4b4b4" stroke-width="1.5" fill="none"/></svg><div style="left:864px;top:444px;width:716px;height:481px;background:#f8f8f8;border:1px solid #a8a8a8"></div><div style="left:1052px;top:445px;width:340px;height:479px;background:#fff"></div><div style="left:1053px;top:447px;width:336px;height:475px;background:#fff;border:1px solid #8f8f8f;border-left-color:#d0d0d0;border-top-color:#b6b6b6"></div><div style="left:0;top:0;width:1661px;height:987px;will-change:transform"><div class="doc" style="left:1073.3px;top:550.00px;line-height:9px;">Ikt.szám:NGM/22831/2/2012</div><div class="doc" style="left:1073.3px;top:581.00px;line-height:9px;font-weight:bold;color:#000;">Tisztelt Hölgyem / Uram!</div><div class="doc" style="left:1073.3px;top:596.00px;line-height:9px;">A Nemzetgazdasági Minisztérium megkeresését köszönettel megkapta. A levelében megfogalmazott</div><div class="doc" style="left:1073.3px;top:604.00px;line-height:9px;">kérdésével kapcsolatban a következőkről tájékoztatjuk:</div><div class="doc" style="left:1073.3px;top:619.00px;line-height:9px;">A kérdése arra irányul, hogy a munka törvénykönyvéről szóló 2012. évi I. törvény (Mt.) 136. § (3) bek.</div><div class="doc" style="left:1073.3px;top:627.00px;line-height:9px;">szerint a 174-vel való osztást hogyan kell értelmezni.</div><div class="doc" style="left:1073.3px;top:642.00px;line-height:9px;">Az Mt. 136. § (3) bekezdésében szereplő szabálynak az a lényege, hogy függetlenül az általános munka-</div><div class="doc" style="left:1073.3px;top:650.00px;line-height:9px;">rend szerinti munkaórák (munkanapok) számától, az alapbér egy órára eső összege havi alapbér esetén is</div><div class="doc" style="left:1073.3px;top:658.00px;line-height:9px;">mindig ugyanaz. Ez az adminisztrációt egyszerűsíti, mert így nem kell figyelemmel lenni az adott hónap</div><div class="doc" style="left:1073.3px;top:665.00px;line-height:9px;">általános munkarend szerinti kötelező munkanapszámára és ezért nem kell minden hónapban újra számolni</div><div class="doc" style="left:1073.3px;top:673.00px;line-height:9px;">az alapbér egy órára eső hányadát. Megjegyezzük, hogy a havi alapbér egy órára jutó összegét 2006 óta a</div><div class="doc" style="left:1073.3px;top:681.00px;line-height:9px;">174-es osztószámmal kell meghatározni.</div><div class="doc" style="left:1073.3px;top:696.00px;line-height:9px;">A munkabért a következő esetekben kell megállapítani az Mt. 136. § (3) bekezdése alkalmazásával:</div><div class="doc" style="left:1073.3px;top:704.00px;line-height:9px;">-<span style="display:inline-block;width:18.6px"></span>ha a munkavállaló számára az Mt. 140-144. §-e, illetve 147. § szerinti bérpótlék fizetésére kerül sor,</div><div class="doc" style="left:1073.3px;top:712.00px;line-height:9px;">és a bérpótlék vetítési alapja az alapbér,</div><div class="doc" style="left:1073.3px;top:720.00px;line-height:9px;">-<span style="display:inline-block;width:18.6px"></span>ha a munkavállaló számára távolléti díj fizetésére kerül sor (Mt. 149. § (1) bekezdés a)-b) pont).</div><div class="doc" style="left:1073.3px;top:735.00px;line-height:9px;">A fentiek alapján a havibéres munkavállalónak a munkaszerződésben meghatározott havi alapbér jár, ha az</div><div class="doc" style="left:1073.3px;top:743.00px;line-height:9px;">adott hónapban nincs munkából kiesett idő. A havi alapbér összege ugyanis átalány jellegű, tehát független</div><div class="doc" style="left:1073.3px;top:751.00px;line-height:9px;">attól, hogy hány munkanap, illetve hány munkaóra van egy adott hónapban.</div><div class="doc" style="left:1073.3px;top:766.00px;line-height:9px;">Kieső idő esetén a munkában töltött időre járó alapbér meghatározásánál a munkavállalóra irányadó</div><div class="doc" style="left:1073.3px;top:774.00px;line-height:9px;">általános munkarend szerinti munkanapok számával kell osztani a havi alapbért a napi alapbér összegének</div><div class="doc" style="left:1073.3px;top:782.00px;line-height:9px;">meghatározásához, és azt kell szorozni a teljesített munkanapok számmal. A kiesett időre járó távolléti díjat</div><div class="doc" style="left:1073.3px;top:790.00px;line-height:9px;">(ha a munkavállaló arra jogosult) a 149. § (1) bekezdésében foglaltaknak megfelelően a 136. § (3) bekezdés</div><div class="doc" style="left:1073.3px;top:797.00px;line-height:9px;">alkalmazásával kell meghatározni.</div><div class="doc" style="left:1073.3px;top:811.00px;line-height:9px;">Felhívom szíves figyelmét, hogy az Alkotmánybíróság 60/1992 (XI. 17.) AB határozata alapján a fentiek a</div><div class="doc" style="left:1073.3px;top:819.00px;line-height:9px;">minisztérium szakmai álláspontját tükrözik, amely egy esetleges jogvita esetén az eljáró bíróságot nem köti.</div><div class="doc" style="left:1073.3px;top:834.00px;line-height:9px;">A késedelmes válaszadásért megértését kérjük.</div><div class="doc" style="left:1073.3px;top:872.00px;line-height:9px;">Üdvözlettel:</div><div class="doc" style="left:1073.3px;top:880.00px;line-height:9px;font-weight:bold;color:#000;">Nemzetgazdasági Minisztérium</div><div class="doc" style="left:1073.3px;top:888.00px;line-height:9px;font-weight:bold;color:#000;">Ügyfélszolgálati Iroda</div><div class="doc" style="left:1073.3px;top:858.00px;font-family:'Liberation Sans',sans-serif;font-size:5.7px;line-height:8px">Kérjük tájékoztatásunk szíves tudomásul vételét!</div><div class="doc" style="left:1197px;top:509.7px;width:118px;text-align:center;font-size:5.55px;line-height:6.7px;letter-spacing:0.28px;color:#4a4a4a;transform:scaleX(1.3)"><span style="font-size:6.6px">N</span>EMZETGAZDASÁGI<br><span style="font-size:6.6px">M</span>INISZTÉRIUM</div><svg style="left:1244px;top:477px" width="26" height="32" viewBox="0 0 26 32"><path d="M11.600 1.200L12.800 3.600M10.800 2.700L13.400 2" stroke="#555" stroke-width="0.700"/><path d="M4 9.800C3.600 5.600 7.500 3.600 12.300 3.600S21 5.600 20.600 9.800" fill="#e6e6e6" stroke="#666" stroke-width="0.900"/><path d="M4.800 8.300C7 6.600 9.500 6.600 12.300 8.300C15 6.600 17.600 6.600 19.800 8.300" fill="none" stroke="#555" stroke-width="1"/><path d="M6.500 6.300h1.200M9.800 5.600h1.200M13.600 5.600h1.200M17 6.300h1.200" stroke="#444" stroke-width="1.100"/><path d="M3.600 10.300H21" stroke="#555" stroke-width="1.300"/><path d="M2.600 11.600H22V21.500C22 26 17.500 29.300 12.300 30.600C7 29.300 2.600 26 2.600 21.500z" fill="#f2f2f2" stroke="#777" stroke-width="0.900"/><path d="M3.200 13.600H12.600M3.200 17H12.600M3.200 20.400H12.600M3.600 23.800H12.600M5.800 27.200H12.600" stroke="#8a8a8a" stroke-width="1.700"/><path d="M12.700 11.600V30.400" stroke="#666" stroke-width="0.800"/><path d="M17.300 13.200V22M15 15.600H19.600M15.400 18.400H19.200" stroke="#888" stroke-width="1.200"/><path d="M15.600 22.400L17.300 23.800L19 22.400" stroke="#444" stroke-width="1" fill="none"/><path d="M13.200 26.500C14.600 23.300 19.600 23.300 21.500 25.600C19.500 28 15.600 29.600 13.200 30.300z" fill="#bdbdbd"/></svg></div><svg style="left:0;top:0" width="1661" height="987" viewBox="0 0 1661 987"><path d="M16.6 184.5H34.4M16.6 191.5H34.4M16.6 198.5H34.4" stroke="#b9b9b9" stroke-width="3.2" stroke-linecap="round" fill="none"/><rect x="57.1" y="180.6" width="19.9" height="1.3" fill="#b5b5b5"/><polygon points="57.9,183.0 76.0,183.0 69.4,191.3 69.4,196.2 65.1,198.7 65.1,191.3" fill="#c7c7c7"/><rect x="74.8" y="186.9" width="4" height="15.9" fill="#bcbcbc"/><path d="M75.6 188.8h3.2M75.6 190.8h3.2M75.6 192.8h3.2M75.6 194.8h3.2M75.6 196.8h3.2M75.6 198.8h3.2M75.6 200.8h3.2" stroke="#e2e2e2" stroke-width="0.9"/><rect x="90.4" y="180.6" width="19.9" height="1.3" fill="#b5b5b5"/><polygon points="91.2,183.0 109.3,183.0 102.7,191.3 102.7,196.2 98.4,198.7 98.4,191.3" fill="#c7c7c7"/><rect x="108.10000000000001" y="186.9" width="4" height="15.9" fill="#bcbcbc"/><path d="M108.9 188.8h3.2M108.9 190.8h3.2M108.9 192.8h3.2M108.9 194.8h3.2M108.9 196.8h3.2M108.9 198.8h3.2M108.9 200.8h3.2" stroke="#e2e2e2" stroke-width="0.9"/><path d="M91.60000000000001 181.79999999999998L111.0 200.0" stroke="#b2b2b2" stroke-width="3" stroke-linecap="round"/><rect x="385.1" y="219.4" width="19.9" height="1.3" fill="#b5b5b5"/><polygon points="385.9,221.8 404.0,221.8 397.4,230.1 397.4,235.0 393.1,237.5 393.1,230.1" fill="#c7c7c7"/><rect x="402.8" y="225.70000000000002" width="4" height="15.9" fill="#bcbcbc"/><path d="M403.6 227.6h3.2M403.6 229.6h3.2M403.6 231.6h3.2M403.6 233.6h3.2M403.6 235.6h3.2M403.6 237.6h3.2M403.6 239.6h3.2" stroke="#e2e2e2" stroke-width="0.9"/><rect x="875.1" y="219.2" width="19.9" height="1.3" fill="#b5b5b5"/><polygon points="875.9,221.6 894.0,221.6 887.4,229.9 887.4,234.8 883.1,237.3 883.1,229.9" fill="#c7c7c7"/><rect x="892.8000000000001" y="225.5" width="4" height="15.9" fill="#bcbcbc"/><path d="M893.6 227.4h3.2M893.6 229.4h3.2M893.6 231.4h3.2M893.6 233.4h3.2M893.6 235.4h3.2M893.6 237.4h3.2M893.6 239.4h3.2" stroke="#e2e2e2" stroke-width="0.9"/><rect x="908.5" y="219.2" width="19.9" height="1.3" fill="#b5b5b5"/><polygon points="909.3,221.6 927.4,221.6 920.8,229.9 920.8,234.8 916.5,237.3 916.5,229.9" fill="#c7c7c7"/><rect x="926.2" y="225.5" width="4" height="15.9" fill="#bcbcbc"/><path d="M927.0 227.4h3.2M927.0 229.4h3.2M927.0 231.4h3.2M927.0 233.4h3.2M927.0 235.4h3.2M927.0 237.4h3.2M927.0 239.4h3.2" stroke="#e2e2e2" stroke-width="0.9"/><path d="M909.7 220.39999999999998L929.1 238.6" stroke="#b2b2b2" stroke-width="3" stroke-linecap="round"/><path d="M288.7 230.5H306.3M297.5 221.7V239.3" stroke="#b9b9b9" stroke-width="3.4" stroke-linecap="round"/><path d="M319 220.8H329.8M319 224.8H329.8M319 228.8H329.8" stroke="#c7c7c7" stroke-width="1.4"/><path d="M325 232.8H340.4M332.7 225.1V240.5" stroke="#b9b9b9" stroke-width="3.2" stroke-linecap="round"/><text x="353.3" y="239.1" font-size="25" font-family="Liberation Sans" fill="#b9b9b9" stroke="#b9b9b9" stroke-width="1.1" textLength="19.4" lengthAdjust="spacingAndGlyphs">Ft</text><defs><radialGradient id="ball" cx="40%" cy="35%" r="75%"><stop offset="0" stop-color="#cfcfcf"/><stop offset="1" stop-color="#a6a6a6"/></radialGradient></defs><polygon points="418.3,227.9 425.5,225.3 438,223.4 440.8,229.2 425.2,241.9 421,236.5" fill="#ececec"/><path d="M427.2 219.6L424.8 224.5M427.2 219.6L434.5 229" stroke="#bdbdbd" stroke-width="1" fill="none"/><circle cx="426.8" cy="232" r="4.9" fill="url(#ball)"/><polygon points="421.3,236.4 439.2,230.3 440.9,229.2 438,235 425.3,241.9 423.7,238" fill="#b3b3b3"/><path d="M421.2 236.3L439.5 230" stroke="#c9c9c9" stroke-width="1.2"/><polygon points="420.2,227.300 425.600,225.300 424.300,228.600 421.300,230.200" fill="#fafafa"/><polygon points="434.300,224.600 438,223.700 439.300,228 436.300,229.300" fill="#f8f8f8"/><circle cx="426.900" cy="223.200" r="1.300" fill="#f4f4f4" stroke="#c2c2c2" stroke-width="0.700"/><circle cx="427.300" cy="230.600" r="1.300" fill="#a2a2a2" opacity="0.700"/><path d="M418.4 228L421.2 236.4" stroke="#c4c4c4" stroke-width="1.2"/><path d="M455 235L462.6 225.6L470.2 235z" fill="#b9b9b9" stroke="#b9b9b9" stroke-width="2" stroke-linejoin="round"/><circle cx="495.4" cy="230.4" r="9.4" fill="none" stroke="#b9b9b9" stroke-width="2.5"/><circle cx="495.6" cy="226.1" r="1.5" fill="#b9b9b9"/><path d="M493.4 228.9H496.9V234.4H498.3V236H493V234.4H494.4V230.5H493.4z" fill="#b9b9b9"/><path d="M521.3 221.8V239.2M528.5 221.8V239.2M535.5 221.8V239.2" stroke="#b9b9b9" stroke-width="3.2" stroke-linecap="round"/><rect x="550.6" y="220.6" width="21.8" height="1.3" fill="#b5b5b5"/><polygon points="551.6,223.1 571.6,223.1 564,232.9 564,237.9 559.2,240.2 559.2,232.9" fill="#c7c7c7"/><path d="M600.2 225.2A7.6 7.6 0 1 0 601.6 233.5" fill="none" stroke="#b9b9b9" stroke-width="3.2"/><polygon points="595.9,230.4 605.4,230.4 605.4,220.9" fill="#b9b9b9"/><path d="M864.9 422.3H882" stroke="#b9b9b9" stroke-width="3.6" stroke-linecap="round"/><path d="M897.7 422.4H915.3M906.5 413.7V431.2" stroke="#b9b9b9" stroke-width="3.5" stroke-linecap="round"/><path d="M932.5 415.700L946.300 429.300M946.300 415.700L932.500 429.300" stroke="#b9b9b9" stroke-width="4.200"/><path d="M928.800 412h8.600l-8.600 8.600zM950 412v8.600l-8.600-8.600zM928.800 433v-8.600l8.600 8.600zM950 433h-8.600l8.600-8.600z" fill="#b9b9b9"/><path d="M962.7 422.5L970 414.6V430.4z M982.2 422.5L974.9 414.6V430.4z" fill="#b9b9b9" stroke="#b9b9b9" stroke-width="2" stroke-linejoin="round"/><path d="M1005.5 413L1013.4 419.9H997.6z M1005.5 432L1013.4 425.1H997.6z" fill="#b9b9b9" stroke="#b9b9b9" stroke-width="2" stroke-linejoin="round"/><text transform="translate(1028 432.300) scale(0.620 1)" font-size="28.500" font-weight="bold" font-family="Liberation Sans" fill="#b9b9b9">1</text><text transform="translate(1042.500 432.300) scale(0.620 1)" font-size="28.500" font-weight="bold" font-family="Liberation Sans" fill="#b9b9b9">1</text><rect x="1027.500" y="427.500" width="3.900" height="6" fill="#e0e0e0"/><rect x="1034.900" y="427.500" width="4" height="6" fill="#e0e0e0"/><rect x="1042" y="427.500" width="3.900" height="6" fill="#e0e0e0"/><rect x="1049.400" y="427.500" width="4" height="6" fill="#e0e0e0"/><text x="1037.600" y="429.400" font-size="13.500" font-weight="bold" font-family="Liberation Sans" fill="#b9b9b9" stroke="#b9b9b9" stroke-width="0.700">:</text><path d="M1063.3 419.4L1070.6 413.2V417.2C1076.5 417.4 1079.7 421.3 1079.7 426.4V431.4H1076.4V426.6C1076.4 423.3 1074.4 421.5 1070.6 421.4V425.6z" fill="#c7c7c7"/><path d="M1112.9 419.4L1105.6 413.2V417.2C1099.700 417.4 1096.5 421.3 1096.5 426.4V431.4H1099.8V426.6C1099.8 423.3 1101.8 421.5 1105.6 421.4V425.6z" fill="#c7c7c7"/><path d="M1128.6 416.8V421.8C1128.6 430.8 1141.4 430.8 1141.4 421.8V420.5" fill="none" stroke="#c7c7c7" stroke-width="3.3"/><polygon points="1134.6,421.4 1141.4,414.4 1148.2,421.4" fill="#c7c7c7"/><rect x="1164.2" y="412.2" width="12.6" height="5" fill="#c7c7c7"/><rect x="1159.8" y="417.8" width="21.4" height="10" rx="1.6" fill="#b4b4b4"/><rect x="1164.2" y="425.4" width="12.6" height="7.4" fill="#c9c9c9"/><path d="M1166 428h9M1166 430.3h9" stroke="#d8d8d8" stroke-width="0.9"/><g transform="translate(1394.4 49.3) rotate(-45)"><path d="M-3.2 -0.3V8.8a3.2 3.2 0 0 0 6.4 0V-0.3A6.8 6.8 0 0 0 2.6 -11.8V-6.8L0 -5.3L-2.6 -6.8V-11.8A6.8 6.8 0 0 0 -3.2 -0.3z" fill="#55ab88"/><circle cx="0" cy="8.6" r="1.6" fill="#f2f2f2"/></g><path d="M1420.8 58.4C1421.6 53.8 1424 50.6 1427.4 49.4H1435.6C1439 50.600 1441.4 53.800 1442.400 58.400z" fill="#8e52ad"/><ellipse cx="1431.500" cy="43.800" rx="6.500" ry="8.000" fill="#f0f0f0"/><ellipse cx="1431.500" cy="43.700" rx="5.900" ry="7.400" fill="#ebb561"/><rect x="1459.100" y="36.900" width="9.400" height="9.400" fill="#d04d31"/><rect x="1470.500" y="36.900" width="9.500" height="9.400" fill="#55ab88"/><rect x="1459.100" y="48.500" width="9.400" height="9.400" fill="#3d78b4"/><rect x="1470.500" y="48.500" width="9.500" height="9.400" fill="#ebb561"/><path d="M1497.600 41.200C1501 40.800 1505 40.500 1509.400 40.400V35.800L1519.200 42.200L1509.400 48.700V43.900C1505 43.800 1501 43.500 1497.600 43.000A0.900 0.900 0 0 1 1497.600 41.200z" fill="#4aadb0"/><path d="M1517.400 51.600C1514 51.200 1510 50.900 1505.600 50.800V46.400L1495.700 52.800L1505.600 59.200V54.500C1510 54.400 1514 54.100 1517.400 53.600A1 1 0 0 0 1517.400 51.600z" fill="#3d78b4"/><circle cx="1545.600" cy="47.300" r="9.300" fill="none" stroke="#3d78b4" stroke-width="2.700"/><circle cx="1545.600" cy="42.800" r="1.500" fill="#3d78b4"/><path d="M1543.300 46.200H1547.100V51.500H1548.500V53.100H1542.900V51.500H1544.400V47.800H1543.300z" fill="#3d78b4"/><text x="1574.600" y="57.900" font-size="30.800" font-weight="bold" font-family="Liberation Sans" fill="#3d78b4">?</text><rect x="1097.700" y="313.600" width="40.800" height="23.000" rx="1.500" fill="none" stroke="#ee0a12" stroke-width="3"/><path d="M1118.500 338V352" stroke="#ee0a12" stroke-width="2"/><polygon points="1114.300,351.300 1122.800,351.300 1118.500,365.500" fill="#ee0a12"/><polygon points="1113.500,318.600 1123.200,317.200 1125.800,320.600 1116,322.200" fill="#f4f6f8"/><polygon points="1111.300,321.400 1116,322.200 1125.800,320.600 1125,327.600 1122.600,330.800 1112.300,328.800" fill="#0f3a5e"/><polygon points="1111.300,321.400 1122.200,323.600 1122.600,330.800 1112.300,328.800" fill="#143f63"/><rect x="1115" y="324.300" width="3.800" height="2.200" fill="#e9d9b8" transform="rotate(10 1117 325.400)"/></svg><div class="t" style="left:618px;top:220.5px;font-size:15px;line-height:20px;color:#bdbdbd;letter-spacing:-0.2px;">F9:<span style="margin-left:1.8px">Generálás</span></div><div class="t" style="left:722px;top:220.5px;font-size:15px;line-height:20px;color:#bdbdbd;letter-spacing:-0.2px;letter-spacing:0.08px">Összes cikkszám</div><svg style="left:843px;top:225px" width="12" height="12" viewBox="0 0 12 12"><path d="M1 9.300L4.300 11.100L10.600 1.300" stroke="#bdbdbd" stroke-width="1.200" fill="none"/></svg>
</body></html>
